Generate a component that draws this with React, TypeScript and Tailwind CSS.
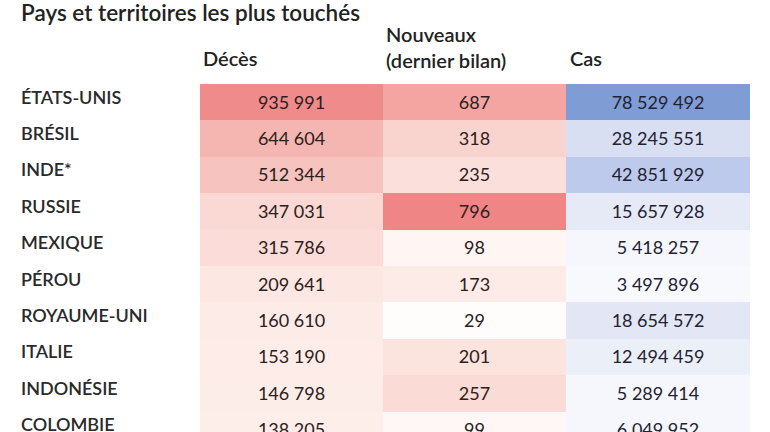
import React from 'react';

type Row = {
  pays: string;
  deces: string;
  nouveaux: string;
  cas: string;
  cDeces: string;
  cNouveaux: string;
  cCas: string;
};

const rows: Row[] = [
  { pays: 'ÉTATS-UNIS', deces: '935 991', nouveaux: '687', cas: '78 529 492', cDeces: 'bg-[#f08b8b]', cNouveaux: 'bg-[#f4a5a1]', cCas: 'bg-[#7f9cd4]' },
  { pays: 'BRÉSIL', deces: '644 604', nouveaux: '318', cas: '28 245 551', cDeces: 'bg-[#f5b5b1]', cNouveaux: 'bg-[#f9d4cf]', cCas: 'bg-[#d8dff2]' },
  { pays: 'INDE*', deces: '512 344', nouveaux: '235', cas: '42 851 929', cDeces: 'bg-[#f7c3bf]', cNouveaux: 'bg-[#fbdfda]', cCas: 'bg-[#bdcaeb]' },
  { pays: 'RUSSIE', deces: '347 031', nouveaux: '796', cas: '15 657 928', cDeces: 'bg-[#fad8d4]', cNouveaux: 'bg-[#ef8685]', cCas: 'bg-[#e5eaf6]' },
  { pays: 'MEXIQUE', deces: '315 786', nouveaux: '98', cas: '5 418 257', cDeces: 'bg-[#fbdcd8]', cNouveaux: 'bg-[#fff6f4]', cCas: 'bg-[#f5f7fc]' },
  { pays: 'PÉROU', deces: '209 641', nouveaux: '173', cas: '3 497 896', cDeces: 'bg-[#fce7e3]', cNouveaux: 'bg-[#fdebe7]', cCas: 'bg-[#f8f9fd]' },
  { pays: 'ROYAUME-UNI', deces: '160 610', nouveaux: '29', cas: '18 654 572', cDeces: 'bg-[#fdebe7]', cNouveaux: 'bg-[#fffdfc]', cCas: 'bg-[#e3e7f5]' },
  { pays: 'ITALIE', deces: '153 190', nouveaux: '201', cas: '12 494 459', cDeces: 'bg-[#fdece8]', cNouveaux: 'bg-[#fbe3de]', cCas: 'bg-[#ebeff8]' },
  { pays: 'INDONÉSIE', deces: '146 798', nouveaux: '257', cas: '5 289 414', cDeces: 'bg-[#fdede9]', cNouveaux: 'bg-[#fadbd6]', cCas: 'bg-[#f5f7fc]' },
  { pays: 'COLOMBIE', deces: '138 205', nouveaux: '99', cas: '6 049 952', cDeces: 'bg-[#fdeeea]', cNouveaux: 'bg-[#fff7f5]', cCas: 'bg-[#f5f7fc]' },
];

export default function App() {
  return (
    <div className="w-[770px] h-[432px] overflow-hidden bg-white font-['Lato','Liberation_Sans',sans-serif] text-[#222]">
      <h1 className="pl-[21px] text-[22.5px] leading-[26px] font-semibold text-[#222]">
        Pays et territoires les plus touchés
      </h1>

      {/* en-têtes */}
      <div className="flex h-[58px] pl-[200px] text-[20px] leading-[26px] font-semibold text-[#222]">
        <div className="w-[183px] pl-[3px] pt-[19px]">Décès</div>
        <div className="w-[183px] pl-[3px] -mt-[5px]">
          Nouveaux
          <br />
          (dernier bilan)
        </div>
        <div className="w-[184px] pl-[4px] pt-[19px]">Cas</div>
      </div>

      <div className="flex flex-col">
        {rows.map(r => (
          <div key={r.pays} className="flex h-[36.4px] items-center">
            <div className="w-[200px] pl-[21px] pb-[10px] text-[18px] font-semibold text-[#2a2a2a]">{r.pays}</div>
            <div className={`w-[183px] h-full flex items-center justify-center text-[18px] text-[#2b2020] ${r.cDeces}`}>{r.deces}</div>
            <div className={`w-[183px] h-full flex items-center justify-center text-[18px] text-[#2b2020] ${r.cNouveaux}`}>{r.nouveaux}</div>
            <div className={`w-[184px] h-full flex items-center justify-center text-[18px] text-[#1f2233] ${r.cCas}`}>{r.cas}</div>
          </div>
        ))}
      </div>
    </div>
  );
}
